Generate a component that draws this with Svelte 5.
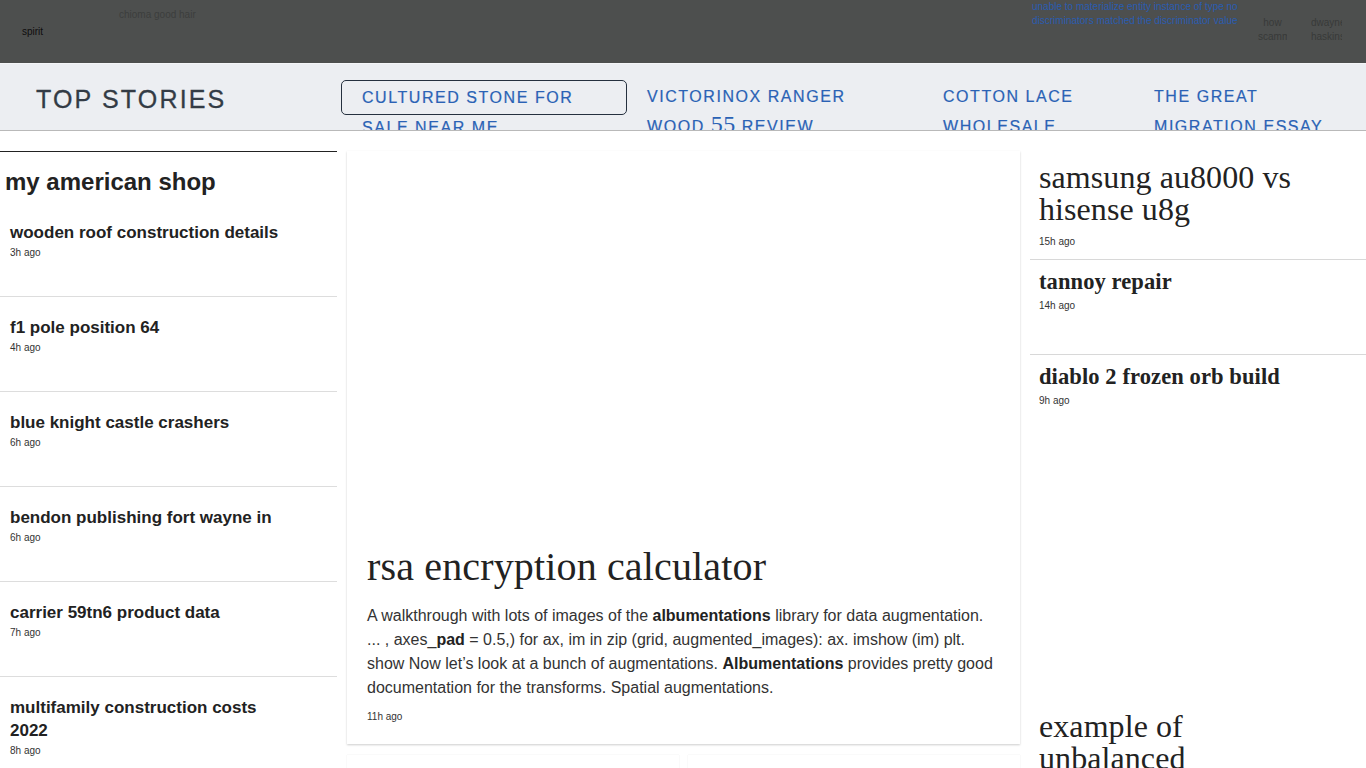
<script>
  const left = [
    ['wooden roof construction details', '3h ago'],
    ['f1 pole position 64', '4h ago'],
    ['blue knight castle crashers', '6h ago'],
    ['bendon publishing fort wayne in', '6h ago'],
    ['carrier 59tn6 product data', '7h ago'],
    ['multifamily construction costs 2022', '8h ago']
  ];
</script>

<div class="page">
  <header class="ad">
    <div class="a1">spirit</div>
    <div class="a2">chioma good hair</div>
    <div class="a3">unable to materialize entity instance of type no discriminators matched the discriminator value</div>
    <div class="a4"><span>how</span><span class="clip">scammers</span></div>
    <div class="a5"><span>dwayne</span><span>haskins</span></div>
  </header>

  <nav class="nav">
    <div class="brand">TOP STORIES</div>
    <a class="item first">CULTURED STONE FOR SALE NEAR ME</a>
    <a class="item second">VICTORINOX RANGER WOOD <span class="num">55</span> REVIEW</a>
    <a class="item third">COTTON LACE WHOLESALE</a>
    <a class="item fourth">THE GREAT MIGRATION ESSAY</a>
  </nav>

  <main class="grid">
    <section class="left">
      <h2>my american shop</h2>
      {#each left as [title, time]}
        <article class="row">
          <h3>{title}</h3>
          <time>{time}</time>
        </article>
      {/each}
    </section>

    <section class="center">
      <article class="hero">
        <h1>rsa encryption calculator</h1>
        <p>A walkthrough with lots of images of the <b>albumentations</b> library for data augmentation. ... , axes_<b>pad</b> = 0.5,) for ax, im in zip (grid, augmented_images): ax. imshow (im) plt. show Now let’s look at a bunch of augmentations. <b>Albumentations</b> provides pretty good documentation for the transforms. Spatial augmentations.</p>
        <time>11h ago</time>
      </article>
      <div class="pair">
        <div class="mini"></div>
        <div class="mini"></div>
      </div>
    </section>

    <section class="right">
      <article class="lead">
        <h2>samsung au8000 vs hisense u8g</h2>
        <time>15h ago</time>
      </article>
      <article class="side s1">
        <h3>tannoy repair</h3>
        <time>14h ago</time>
      </article>
      <article class="side s2">
        <h3>diablo 2 frozen orb build</h3>
        <time>9h ago</time>
      </article>
      <article class="lead last">
        <h2>example of unbalanced</h2>
      </article>
    </section>
  </main>
</div>

<style>
  :global(body) {
    margin: 0;
    background: #fff;
    overflow: hidden;
  }
  .page {
    height: 768px;
    overflow: hidden;
    font-family: "Liberation Sans", Arial, sans-serif;
    color: #222;
  }
  h1, h2, h3, p { margin: 0; }
  time {
    display: block;
    font-size: 10px;
    line-height: 12px;
    color: #333;
  }

  .ad {
    display: flex;
    height: 63px;
    background: #4d4f4e;
    border-bottom: 1px solid #f4f5f7;
    font-size: 10px;
    line-height: 14px;
    overflow: hidden;
  }
  .a1 { width: 97px; margin-left: 22px; padding-top: 25px; color: #0d0d0d; }
  .a2 { width: 913px; padding-top: 8px; color: #3c3e3d; }
  .a3 { width: 207px; margin-right: 19px; color: #2a5cb0; }
  .a4, .a5 {
    display: flex;
    flex-direction: column;
    color: #383a39;
    overflow: hidden;
    white-space: nowrap;
    padding-top: 16px;
  }
  .a4 { width: 29px; margin-right: 24px; align-items: center; }
  .a4 .clip { align-self: flex-start; }
  .a5 { width: 31px; }

  .nav {
    display: flex;
    height: 66px;
    background: #eceef2;
    border-bottom: 1px solid #b9b9b9;
    overflow: hidden;
  }
  .brand {
    width: 305px;
    padding: 19px 0 0 36px;
    font-size: 25px;
    line-height: 32px;
    letter-spacing: 2.15px;
    font-weight: 400;
    color: #333b45;
    -webkit-text-stroke: 0.3px #333b45;
  }
  .item {
    display: block;
    font-size: 16px;
    line-height: 30px;
    letter-spacing: 1.55px;
    color: #2a62b5;
    margin-top: 18px;
    -webkit-text-stroke: 0.2px #2a62b5;
  }
  .item.first {
    width: 286px;
    height: 35px;
    box-sizing: border-box;
    margin-top: 16px;
    margin-right: 20px;
    padding: 2px 20px 0;
    border: 1px solid #25303f;
    border-radius: 5px;
  }
  .second { width: 226px; margin-right: 70px; }
  .second .num {
    font-family: "Liberation Serif", serif;
    font-size: 24px;
    line-height: 20px;
    letter-spacing: 0.5px;
    -webkit-text-stroke: 0;
  }
  .third { width: 211px; }
  .fourth { width: 200px; }

  .grid {
    display: grid;
    grid-template-columns: 337px 673px 336px;
    column-gap: 10px;
    padding-top: 20px;
  }

  .left { border-top: 1px solid #222; }
  .left h2 {
    font-size: 24px;
    line-height: 30px;
    font-weight: 700;
    padding: 15px 0 5px 5px;
    color: #222;
  }
  .row {
    padding: 19px 50px 0 10px;
    height: 75px;
    border-bottom: 1px solid #ddd;
  }
  .row h3 {
    font-size: 17px;
    line-height: 23px;
    font-weight: 700;
    color: #222;
    margin-bottom: 3px;
  }
  .row:last-child { border-bottom: 0; }

  .center { display: flex; flex-direction: column; }
  .hero {
    height: 593px;
    box-sizing: border-box;
    padding: 0 20px 21px;
    display: flex;
    flex-direction: column;
    justify-content: flex-end;
    background: #fff;
    box-shadow: 0 1px 2px rgba(0, 0, 0, 0.2);
  }
  .hero h1 {
    font-family: "Liberation Serif", serif;
    font-weight: 400;
    font-size: 40px;
    line-height: 44px;
    letter-spacing: 0.15px;
    color: #222;
    margin-bottom: 15px;
  }
  .hero p {
    font-size: 16px;
    line-height: 24px;
    color: #333;
    margin-bottom: 11px;
  }
  .hero p b { color: #222; }
  .pair {
    display: grid;
    grid-template-columns: 332px 332px;
    column-gap: 9px;
    margin-top: 11px;
  }
  .mini {
    height: 60px;
    box-shadow: 0 0 1px rgba(0, 0, 0, 0.12);
  }

  .right { display: flex; flex-direction: column; }
  .lead h2 {
    font-family: "Liberation Serif", serif;
    font-weight: 400;
    font-size: 32px;
    line-height: 32px;
    color: #222;
    letter-spacing: 0.08px;
  }
  .lead {
    padding: 10px 40px 0 9px;
    height: 98px;
    border-bottom: 1px solid #d8d8d8;
  }
  .lead time { margin-top: 11px; }
  .side {
    padding: 10px 9px 0;
    border-bottom: 1px solid #d8d8d8;
    height: 84px;
  }
  .side h3 {
    font-family: "Liberation Serif", serif;
    font-weight: 700;
    font-size: 22.5px;
    line-height: 24px;
    letter-spacing: 0.1px;
    color: #222;
    margin-bottom: 6px;
  }
  .s2 { border-bottom: 0; height: 345px; }
  .lead.last { height: auto; border: 0; padding-top: 0; padding-right: 150px; }
</style>
